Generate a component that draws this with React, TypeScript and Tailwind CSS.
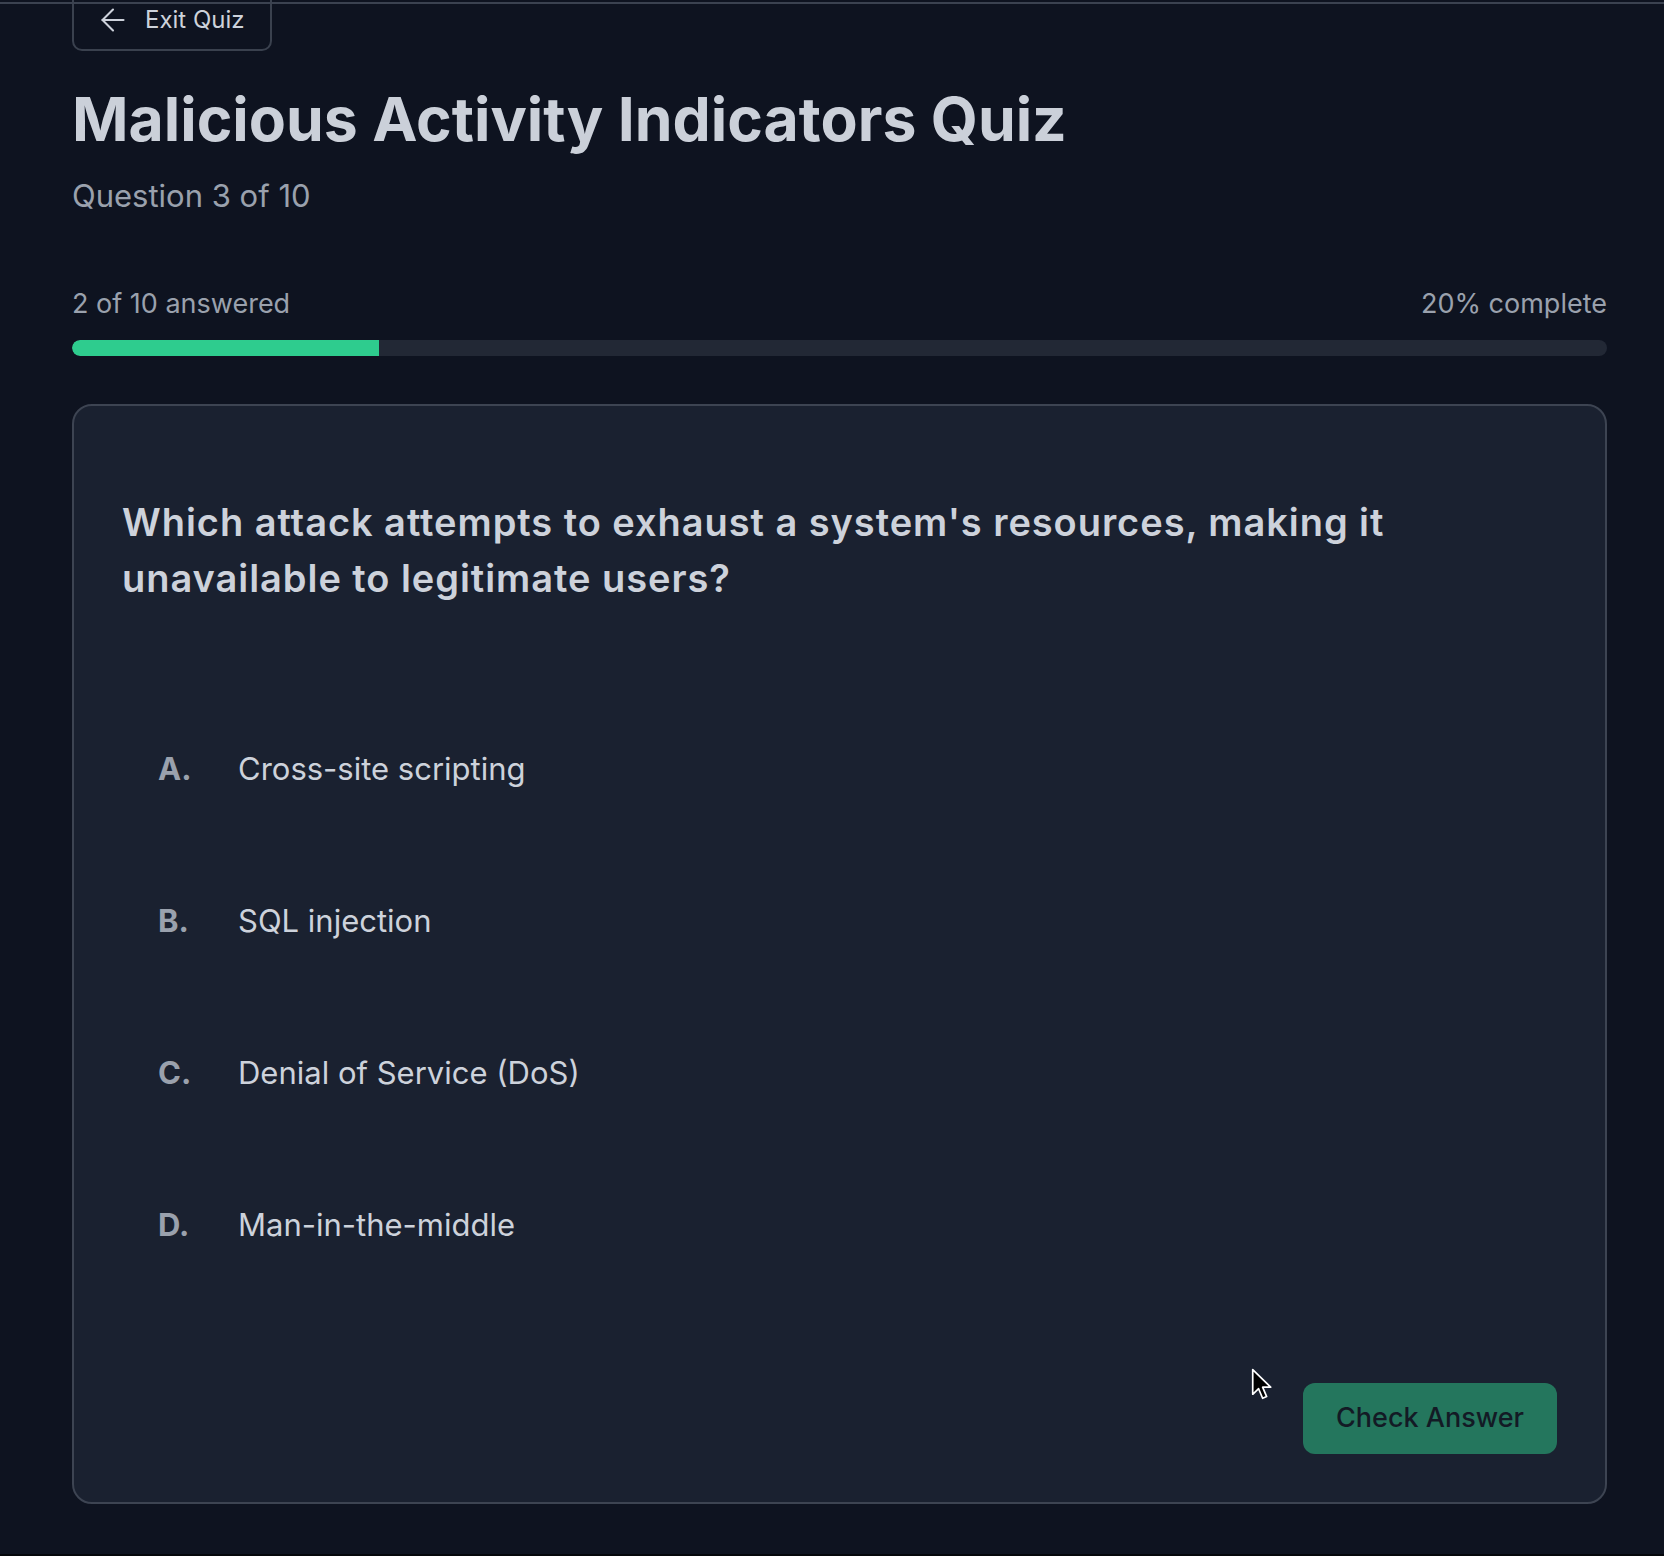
import { ArrowLeft } from "lucide-react";

const OPTIONS = [
  { key: "A", text: "Cross-site scripting" },
  { key: "B", text: "SQL injection" },
  { key: "C", text: "Denial of Service (DoS)" },
  { key: "D", text: "Man-in-the-middle" },
];

const ANSWERED = 2;
const TOTAL = 10;

export default function App() {
  const pct = Math.round((ANSWERED / TOTAL) * 100);

  return (
    <div className="min-h-[1556px] bg-[#05070b] font-['Inter',sans-serif]">
      <div className="relative bg-[#0e1320] pb-[50px]">
        {/* header edge above the scrolled content */}
        <div className="absolute inset-x-0 top-[2px] z-10 h-[2px] bg-[#3b4250]" />

        <div className="flex flex-col pl-[72px] pr-[57px]">
          <button className="-mt-[11px] flex h-[62px] w-[200px] items-center gap-[14px] rounded-[10px] border-2 border-[#3a414e] pl-[21px] text-[24px] text-[#cdd2db]">
            <ArrowLeft size={36} strokeWidth={1.4} />
            Exit Quiz
          </button>

          <h1 className="mt-[36px] text-[60.7px] font-bold leading-[65px] text-[#cbd0d9]">
            Malicious Activity Indicators Quiz
          </h1>
          <p className="mt-[23px] text-[31px] leading-[42px] text-[#9aa1ad]">
            Question 3 of 10
          </p>

          <div className="mt-[67px] flex justify-between text-[27px] leading-[40px] text-[#9aa1ad]">
            <span>
              {ANSWERED} of {TOTAL} answered
            </span>
            <span>{pct}% complete</span>
          </div>
          <div className="mt-[16px] h-[16px] overflow-hidden rounded-full bg-[#222835]">
            <div className="h-full rounded-l-full bg-[#2ecc8e]" style={{ width: `${pct}%` }} />
          </div>

          <div className="relative mt-[48px] rounded-[20px] border-2 border-[#3d4452] bg-[#1a2130] p-[48px]">
            <h2 className="mt-[40px] max-w-[1300px] text-[38px] font-semibold leading-[56px] tracking-[0.025em] text-[#cdd2db]">
              Which attack attempts to exhaust a system's resources, making it unavailable to
              legitimate users?
            </h2>

            <div className="mt-[118px] flex flex-col gap-[62px]">
              {OPTIONS.map((o) => (
                <div key={o.key} className="flex items-center rounded-xl px-[36px] py-[24px]">
                  <span className="w-[80px] shrink-0 text-[31px] font-bold leading-[42px] text-[#9aa1ad]">
                    {o.key}.
                  </span>
                  <span className="text-[31px] leading-[42px] text-[#cdd2db]">{o.text}</span>
                </div>
              ))}
            </div>

            <div className="mt-[113px] flex justify-end">
              <button className="h-[71px] rounded-[12px] bg-[#24765d] px-[33px] text-[27px] font-medium text-[#131a25]">
                Check Answer
              </button>
            </div>

            {/* mouse pointer */}
            <svg
              className="absolute left-[1177px] top-[962px]"
              width="22"
              height="34"
              viewBox="0 0 14 22"
            >
              <path
                d="M1 1 L1 17 L4.8 13.4 L7.4 19.6 L10 18.5 L7.4 12.4 L12.6 12.4 Z"
                fill="#000"
                stroke="#fff"
                strokeWidth="1.1"
                strokeLinejoin="round"
              />
            </svg>
          </div>
        </div>
      </div>
    </div>
  );
}
